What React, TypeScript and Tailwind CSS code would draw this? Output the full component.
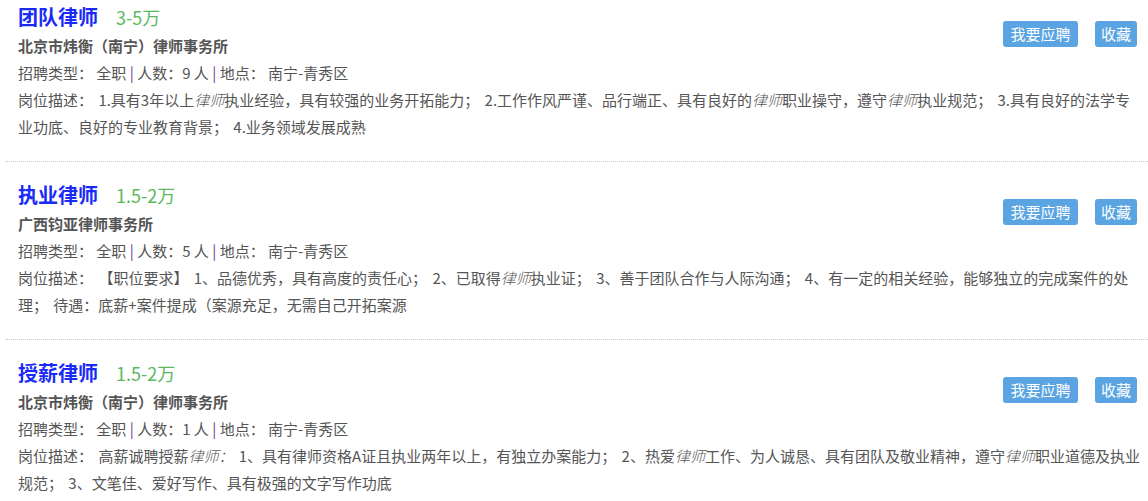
import React from "react"

type Job = {
  title: string
  salary: string
  company: string
  count: number
  desc: React.ReactNode
}

const Em = ({ children }: { children: React.ReactNode }) => <em className="italic font-light">{children}</em>

const jobs: Job[] = [
  {
    title: "团队律师",
    salary: "3-5万",
    company: "北京市炜衡（南宁）律师事务所",
    count: 9,
    desc: (
      <>
        1.具有3年以上<Em>律师</Em>执业经验，具有较强的业务开拓能力； 2.工作作风严谨、品行端正、具有良好的<Em>律师</Em>职业操守，遵守<Em>律师</Em>执业规范； 3.具有良好的法学专业功底、良好的专业教育背景； 4.业务领域发展成熟
      </>
    ),
  },
  {
    title: "执业律师",
    salary: "1.5-2万",
    company: "广西钧亚律师事务所",
    count: 5,
    desc: (
      <>
        【职位要求】 1、品德优秀，具有高度的责任心； 2、已取得<Em>律师</Em>执业证； 3、善于团队合作与人际沟通； 4、有一定的相关经验，能够独立的完成案件的处理； 待遇：底薪+案件提成（案源充足，无需自己开拓案源
      </>
    ),
  },
  {
    title: "授薪律师",
    salary: "1.5-2万",
    company: "北京市炜衡（南宁）律师事务所",
    count: 1,
    desc: (
      <>
        高薪诚聘授薪<Em>律师：</Em> 1、具有律师资格A证且执业两年以上，有独立办案能力； 2、热爱<Em>律师</Em>工作、为人诚恳、具有团队及敬业精神，遵守<Em>律师</Em>职业道德及执业规范； 3、文笔佳、爱好写作、具有极强的文字写作功底
      </>
    ),
  },
]

function JobItem({ job, first, last }: { job: Job; first: boolean; last: boolean }) {
  return (
    <div
      className={`pl-[12px] pr-[8px] ${first ? "pt-[3px]" : "pt-[19px]"} pb-[21px] ${
        last ? "" : "border-b border-dotted border-[#c8c8c8]"
      }`}
    >
      <div className="float-right mt-[18px] mr-[3px] flex gap-[17px]">
        <button className="h-[26px] w-[75px] rounded-[3px] bg-[#5aa4e2] text-[15px] leading-[26px] text-white">
          我要应聘
        </button>
        <button className="h-[26px] w-[42px] rounded-[3px] bg-[#5aa4e2] text-[15px] leading-[26px] text-white">
          收藏
        </button>
      </div>
      <div className="flex h-[28px] items-center">
        <span className="text-[20px] font-bold text-[#1a2af7]">{job.title}</span>
        <span className="ml-[18px] text-[18px] text-[#5cb85c]">{job.salary}</span>
      </div>
      <div className="mt-[1px] text-[15px] leading-[27px] font-bold text-[#555]">{job.company}</div>
      <div className="text-[15px] leading-[27px] text-[#555]">
        招聘类型： 全职 <span className="text-[#6b3a92]">|</span> 人数：{job.count} 人{" "}
        <span className="text-[#6b3a92]">|</span> 地点： 南宁-青秀区
      </div>
      <div className="text-[15px] leading-[27px] text-[#555] [word-spacing:2px]">岗位描述： {job.desc}</div>
    </div>
  )
}

export default function App() {
  return (
    <div
      className="w-[1148px] h-[501px] overflow-hidden bg-white"
      style={{ fontFamily: '"Noto Sans CJK SC", "Noto Sans", sans-serif' }}
    >
      <div className="ml-[6px]">
        {jobs.map((job, i) => (
          <JobItem key={i} job={job} first={i === 0} last={i === jobs.length - 1} />
        ))}
      </div>
    </div>
  )
}
